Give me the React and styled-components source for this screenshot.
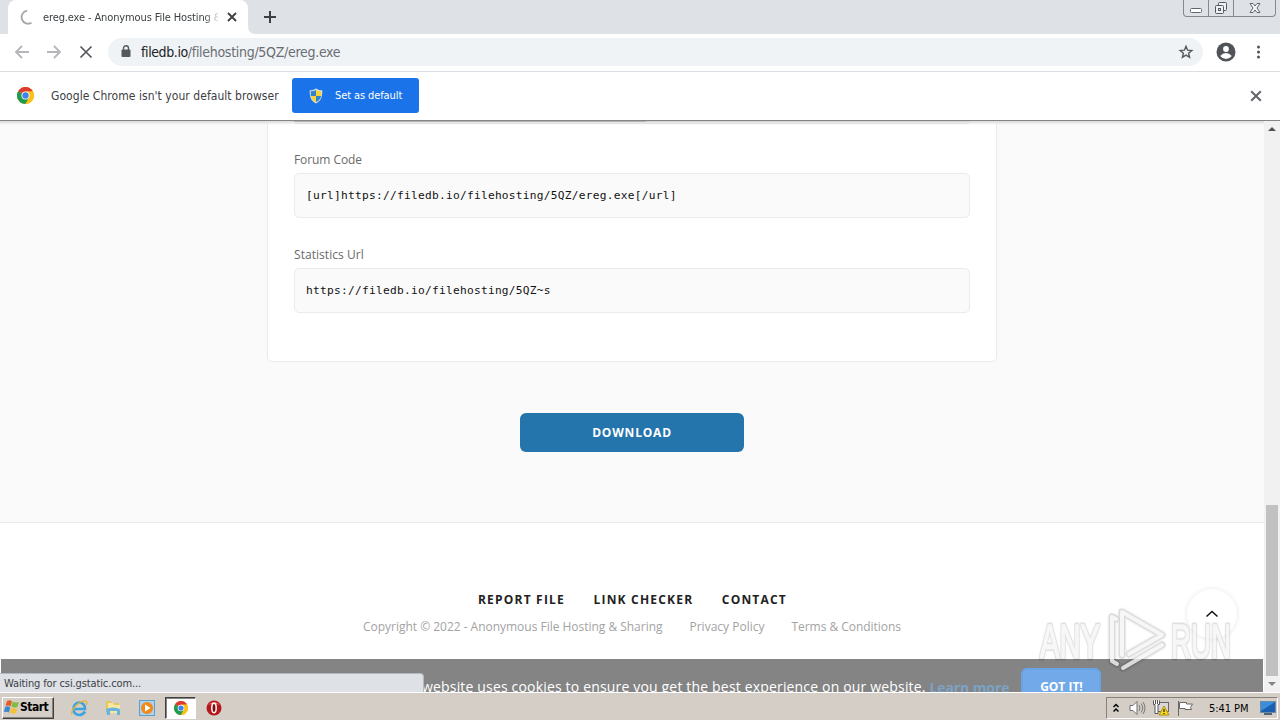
import React from "react";
import styled, { createGlobalStyle } from "styled-components";

const GlobalStyle = createGlobalStyle`
  * {
    box-sizing: border-box;
  }

  body {
    margin: 0;
    overflow: hidden;
    background: #fff;
  }
`;

const uiFont = `"DejaVu Sans Condensed", "DejaVu Sans", sans-serif`;
const pageFont = `"Open Sans", "Noto Sans", sans-serif`;

const Desktop = styled.div`
  display: flex;
  flex-direction: column;
  width: 1280px;
  height: 720px;
  overflow: hidden;
  font-family: ${uiFont};
`;

const Label = styled.span`
  font-size: ${(p) => p.$size || 11}px;
  letter-spacing: ${(p) => p.$spacing || 0}px;
  color: ${(p) => p.$color || "#3c4043"};
  font-weight: ${(p) => p.$weight || 400};
  white-space: pre;
`;

/* Tab strip */

const TabStrip = styled.div`
  display: flex;
  align-items: flex-start;
  height: 34px;
  background: #dee1e6;
`;

const Tab = styled.div`
  display: flex;
  align-items: center;
  width: 240px;
  height: 34px;
  margin-left: 8px;
  padding-left: 11px;
  background: #fff;
  border-radius: 8px 8px 0 0;
`;

const TabTitle = styled.div`
  width: 175px;
  margin: 0 9px 0 8px;
  overflow: hidden;
  line-height: 16px;
  mask-image: linear-gradient(to right, #000 92%, transparent 102%);
`;

const TabFoot = styled.svg`
  align-self: flex-end;
  width: 8px;
  height: 8px;
`;

const NewTab = styled.svg`
  width: 14px;
  height: 14px;
  margin: 10px 0 0 7px;
`;

const Controls = styled.div`
  display: flex;
  height: 17px;
  margin-left: auto;
  margin-right: 4px;
  border: 1px solid #85898f;
  border-top: 0;
  border-radius: 0 0 4px 4px;
`;

const Control = styled.div`
  display: flex;
  align-items: center;
  justify-content: center;
  width: ${(p) => p.$width}px;
  border-left: ${(p) => (p.$divided ? "1px solid #85898f" : "0")};
`;

/* Toolbar */

const Toolbar = styled.div`
  display: flex;
  align-items: center;
  height: 38px;
  padding: 0 13px 2px 14px;
  background: #fff;
  border-bottom: 1px solid #dcdee1;
`;

const NavIcon = styled.svg`
  flex: none;
  width: 16px;
  height: 16px;
  margin-right: 16px;
`;

const AddressBar = styled.div`
  display: flex;
  flex: 1;
  align-items: center;
  height: 28px;
  margin-left: -2px;
  padding: 0 9px 0 13px;
  background: #f0f3f6;
  border-radius: 14px;
`;

const Url = styled.div`
  flex: 1;
  margin-left: 10px;
  white-space: nowrap;
`;

const InfoBar = styled.div`
  display: flex;
  align-items: center;
  height: 49px;
  padding: 0 18px 1px 17px;
  background: #fff;
  border-bottom: 1px solid #848484;
`;

const InfoText = styled.div`
  width: 229px;
  margin: 0 0 2px 17px;
`;

const DefaultButton = styled.div`
  display: flex;
  align-items: center;
  gap: 12px;
  width: 127px;
  height: 35px;
  margin: 0 auto 0 12px;
  padding-left: 17px;
  background: #1a73e8;
  border-radius: 3px;
`;

/* Page */

const Viewport = styled.div`
  position: relative;
  display: flex;
  height: 571px;
  overflow: hidden;
  background: #fff;
`;

const Page = styled.div`
  flex: 1;
  font-family: ${pageFont};
`;

const Main = styled.div`
  display: flex;
  flex-direction: column;
  align-items: center;
  height: 402px;
  background: linear-gradient(#d9d9d9, #fafafa 4px);
  border-bottom: 1px solid #e9e9e9;
`;

const Card = styled.div`
  width: 730px;
  height: 241px;
  padding: 0 26px;
  background: linear-gradient(#d9d9d9, #fff 4px);
  border: 1px solid #e9e9e9;
  border-top: 0;
  border-radius: 0 0 5px 5px;
`;

const FieldEnd = styled.div`
  height: 3px;
  margin-bottom: 24px;
  background: linear-gradient(to right, #b4b4b4 52%, #d3d5d7 52%);
  background-size: 100% 1px;
  background-repeat: no-repeat;
  border-bottom: 1px solid #e2e3e4;
  border-radius: 0 0 5px 5px;
`;

const Field = styled.div`
  margin-bottom: 25px;
`;

const FieldLabel = styled.div`
  height: 20px;
  margin-bottom: 5px;
  line-height: 20px;
`;

const CodeBox = styled.div`
  height: 45px;
  padding-left: 11px;
  background: #fafafa;
  border: 1px solid #ebebeb;
  border-radius: 5px;
  color: #111;
  font: 11.2px/43px "DejaVu Sans Mono", monospace;
  letter-spacing: 0.26px;
`;

const DownloadButton = styled.div`
  width: 224px;
  height: 39px;
  margin-top: 51px;
  background: #2475ab;
  border-radius: 6px;
  line-height: 37px;
  text-align: center;
`;

const Footer = styled.div`
  padding-top: 66px;
`;

const FooterRow = styled.div`
  display: flex;
  gap: ${(p) => p.$gap}px;
  height: ${(p) => p.$height}px;
  padding-left: ${(p) => p.$left}px;
  line-height: 22px;
`;

const CookieBar = styled.div`
  position: absolute;
  left: 1px;
  bottom: 0;
  display: flex;
  width: 1262px;
  height: 33px;
  padding-left: 421px;
  background: #848484;
  overflow: hidden;
  font-family: ${pageFont};
  line-height: 56px;
`;

const LearnMore = styled.div`
  width: 81px;
  white-space: nowrap;
`;

const GotIt = styled.div`
  width: 80px;
  height: 36px;
  margin: 9px 0 0 11px;
  background: #72a9e8;
  border: 2px solid #69a4e7;
  border-radius: 6px;
  line-height: 31px;
  text-align: center;
`;

const TopButton = styled.div`
  position: absolute;
  left: 1187px;
  top: 468px;
  display: flex;
  align-items: center;
  justify-content: center;
  width: 50px;
  height: 50px;
  background: #fff;
  border-radius: 50%;
  box-shadow: 0 0 5px rgba(0, 0, 0, 0.1);
`;

const StatusBubble = styled.div`
  position: absolute;
  left: 0;
  bottom: 0;
  width: 424px;
  height: 19px;
  padding-left: 4px;
  background: #dee1e6;
  border-top: 1px solid #b5b8bc;
  border-right: 1px solid #b5b8bc;
  border-radius: 0 4px 0 0;
  line-height: 16px;
`;

const Watermark = styled.svg`
  position: absolute;
  left: 1030px;
  top: 479px;
`;

const Scrollbar = styled.div`
  display: flex;
  flex-direction: column;
  align-items: center;
  justify-content: space-between;
  width: 16px;
  padding: 5px 0 5px;
  background: #f1f1f1;
`;

const Thumb = styled.div`
  width: 12px;
  height: 171px;
  margin: auto 0 6px;
  background: #c1c1c1;
`;

/* Taskbar */

const Taskbar = styled.div`
  display: flex;
  align-items: center;
  height: 28px;
  padding: 2px 2px 0 2px;
  background: #d5cec7;
  border-top: 1px solid #fff;
`;

const StartButton = styled.div`
  display: flex;
  align-items: center;
  width: 52px;
  height: 22px;
  padding: 0 0 2px 1px;
  border: 1px solid;
  border-color: #fff #404040 #404040 #fff;
  box-shadow: inset -1px -1px #87817c;
`;

const QuickLaunch = styled.div`
  display: flex;
  align-items: center;
  margin-left: 8px;
`;

const LaunchItem = styled.div`
  display: flex;
  align-items: center;
  justify-content: center;
  width: ${(p) => (p.$active ? 31 : 34)}px;
  height: 22px;
  margin: ${(p) => (p.$active ? "0 1px 0 1px" : "0")};
  background: ${(p) => (p.$active ? "#fff" : "transparent")};
  border: ${(p) => (p.$active ? "1px solid" : "0")};
  border-color: #404040 #fff #fff #404040;
  box-shadow: ${(p) => (p.$active ? "inset 1px 1px #87817c" : "none")};
`;

const Tray = styled.div`
  display: flex;
  align-items: center;
  width: 172px;
  height: 22px;
  margin-left: auto;
  padding-left: 6px;
  border: 1px solid;
  border-color: #87817c #fff #fff #87817c;
`;

const TrayIcon = styled.svg`
  flex: none;
  margin-right: ${(p) => p.$gap || 0}px;
`;

const Clock = styled.div`
  flex: 1;
  padding-bottom: 3px;
`;

const ChromeLogo = ({ size }) => (
  <svg width={size} height={size} viewBox="0 0 24 24">
    <circle cx="12" cy="12" r="12" fill="#fbc116" />
    <path d="M12 12 1.6 6A12 12 0 0 1 22.4 6z" fill="#dd3b2f" />
    <path d="M1.6 6 12 12l5 3-5 9A12 12 0 0 1 1.6 6z" fill="#249a50" />
    <path d="M12 6h10.4A12 12 0 0 1 12 24l5.2-9z" fill="#fbc116" />
    <circle cx="12" cy="12" r="5.7" fill="#fff" />
    <circle cx="12" cy="12" r="4.5" fill="#3f83e8" />
  </svg>
);

const Cross = ({ size, color, width = 2 }) => (
  <svg width={size} height={size} viewBox="0 0 10 10">
    <path d="M1 1 9 9M9 1 1 9" stroke={color} strokeWidth={width} />
  </svg>
);

const Shield = () => (
  <svg width="14" height="16" viewBox="0 0 14 16">
    <path d="M7 .5c2 1.4 4 1.8 6.3 1.8C13.5 9 12 13 7 15.5 2 13 .5 9 .7 2.3 3 2.3 5 1.9 7 .5z" fill="#d9dde0" />
    <path d="M7 2v6H1.8V3.3Q5 3.2 7 2z" fill="#3184cb" />
    <path d="M7 2v6h5.2V3.3Q9 3.2 7 2z" fill="#f8d336" />
    <path d="M7 8v6.2Q2.5 12 1.9 8z" fill="#f8d336" />
    <path d="M7 8v6.2Q11.5 12 12.1 8z" fill="#3184cb" />
  </svg>
);

const BrowserTabs = () => (
  <TabStrip>
    <Tab>
      <svg width="16" height="16" viewBox="0 0 16 16">
        <path d="M8 1.6A6.6 6.6 0 1 0 12.5 13.8" fill="none" stroke="#a4a7aa" strokeWidth="1.8" />
      </svg>
      <TabTitle>
        <Label $size={11} $spacing={-0.12}>ereg.exe - Anonymous File Hosting &amp; Sharing</Label>
      </TabTitle>
      <Cross size={10} color="#3c4043" width={1.8} />
    </Tab>
    <TabFoot viewBox="0 0 8 8">
      <path d="M0 0Q0 8 8 8H0z" fill="#fff" />
    </TabFoot>
    <NewTab viewBox="0 0 14 14">
      <path d="M7 1v12M1 7h12" stroke="#3c4043" strokeWidth="2" />
    </NewTab>
    <Controls>
      <Control $width={24}>
        <svg width="12" height="16" viewBox="0 0 12 16">
          <rect x=".5" y="8.5" width="11" height="4" rx="1" fill="#fff" stroke="#62676e" />
        </svg>
      </Control>
      <Control $width={25} $divided>
        <svg width="14" height="16" viewBox="0 0 14 16" fill="#eef0f3" stroke="#555a61">
          <rect x="4.5" y="2.5" width="8" height="8" rx="1" />
          <rect x="1.5" y="5.5" width="8" height="8" rx="1" />
          <rect x="4.5" y="8.5" width="2" height="2" />
        </svg>
      </Control>
      <Control $width={42} $divided>
        <svg width="12" height="16" viewBox="0 0 12 16">
          <path d="M1 3.500h3L6 6l2-2.500h3L8 8l3 4.500H8L6 10l-2 2.500H1L4 8z" fill="#f5f6f8" stroke="#62676e" />
        </svg>
      </Control>
    </Controls>
  </TabStrip>
);

const BrowserToolbar = () => (
  <Toolbar>
    <NavIcon viewBox="0 0 16 16" fill="none" stroke="#b4b6b9" strokeWidth="1.8">
      <path d="M15 8H2M8 2 2 8l6 6" />
    </NavIcon>
    <NavIcon viewBox="0 0 16 16" fill="none" stroke="#b4b6b9" strokeWidth="1.8">
      <path d="M1 8h13M8 2l6 6-6 6" />
    </NavIcon>
    <NavIcon viewBox="0 0 16 16" fill="none" stroke="#55585c" strokeWidth="1.7">
      <path d="M2.500 2.500 13.500 13.500M13.500 2.500 2.500 13.500" />
    </NavIcon>
    <AddressBar>
      <svg width="10" height="13" viewBox="0 0 10 13">
        <path d="M2.500 5V3.300a2.500 2.500 0 0 1 5 0V5" fill="none" stroke="#55595e" strokeWidth="1.4" />
        <rect x=".5" y="4.5" width="9" height="7.5" rx="1" fill="#55595e" />
      </svg>
      <Url>
        <Label $size={14} $spacing={-0.4} $color="#202124">filedb.io</Label>
        <Label $size={14} $spacing={-0.29} $color="#6a6e73">/filehosting/5QZ/ereg.exe</Label>
      </Url>
      <svg width="16" height="16" viewBox="0 0 16 16">
        <path d="m8 2.300 1.600 3.900 4.200.300-3.200 2.700 1 4.100L8 11.100l-3.600 2.200 1-4.100-3.200-2.700 4.200-.300z" fill="none" stroke="#55595e" strokeWidth="1.4" />
      </svg>
    </AddressBar>
    <svg width="46" height="20" viewBox="0 0 46 20">
      <circle cx="23" cy="10" r="9.5" fill="#505458" />
      <circle cx="23" cy="7" r="2.9" fill="#fff" />
      <path d="M17.200 14q2.500-3 5.800-3t5.800 3q-2.500 3-5.800 3t-5.800-3z" fill="#fff" />
    </svg>
    <svg width="18" height="16" viewBox="0 0 18 16" fill="#505458">
      <circle cx="9.5" cy="3" r="1.5" />
      <circle cx="9.5" cy="8" r="1.5" />
      <circle cx="9.5" cy="13" r="1.5" />
    </svg>
  </Toolbar>
);

const DefaultBrowserBar = () => (
  <InfoBar>
    <ChromeLogo size={17} />
    <InfoText>
      <Label $size={12} $spacing={0.05}>Google Chrome isn't your default browser</Label>
    </InfoText>
    <DefaultButton>
      <Shield />
      <Label $size={11} $color="#fff" $spacing={-0.1}>Set as default</Label>
    </DefaultButton>
    <Cross size={12} color="#62666a" width={1.7} />
  </InfoBar>
);

const WebPage = () => (
  <Page>
    <Main>
      <Card>
        <FieldEnd />
        <Field>
          <FieldLabel>
            <Label $size={12} $color="#6a6a6a" $spacing={-0.08}>Forum Code</Label>
          </FieldLabel>
          <CodeBox>[url]https://filedb.io/filehosting/5QZ/ereg.exe[/url]</CodeBox>
        </Field>
        <Field>
          <FieldLabel>
            <Label $size={12} $color="#6a6a6a" $spacing={0.05}>Statistics Url</Label>
          </FieldLabel>
          <CodeBox>https://filedb.io/filehosting/5QZ~s</CodeBox>
        </Field>
      </Card>
      <DownloadButton>
        <Label $size={12} $weight={700} $color="#fff" $spacing={0.8}>DOWNLOAD</Label>
      </DownloadButton>
    </Main>
    <Footer>
      <FooterRow $left={478} $gap={28.5} $height={27}>
        <Label $size={12} $weight={700} $color="#222" $spacing={1.2}>REPORT FILE</Label>
        <Label $size={12} $weight={700} $color="#222" $spacing={1.2}>LINK CHECKER</Label>
        <Label $size={12} $weight={700} $color="#222" $spacing={1.2}>CONTACT</Label>
      </FooterRow>
      <FooterRow $left={363} $gap={27} $height={22}>
        <Label $size={12} $color="#a3a3a3" $spacing={-0.02}>Copyright © 2022 - Anonymous File Hosting &amp; Sharing</Label>
        <Label $size={12} $color="#a3a3a3">Privacy Policy</Label>
        <Label $size={12} $color="#a3a3a3" $spacing={-0.04}>Terms &amp; Conditions</Label>
      </FooterRow>
    </Footer>
  </Page>
);

const AnyRunText = (props) => (
  <g fontFamily="Liberation Sans, sans-serif" fontSize="48" strokeLinejoin="round" {...props}>
    <text x="1040" y="658" textLength="60" lengthAdjust="spacingAndGlyphs">ANY</text>
    <text x="1171" y="658" textLength="60" lengthAdjust="spacingAndGlyphs">RUN</text>
  </g>
);

const markPath = "M1116 619l-4-2v44l5 3M1122 655v-43l40 23-33 19M1123 668l39-23";

const AnyRun = () => (
  <Watermark width="215" height="80" viewBox="1030 600 215 80">
    <AnyRunText fill="#000" stroke="#000" strokeWidth="6" opacity="0.06" />
    <AnyRunText fill="#000" stroke="#000" strokeWidth="4" opacity="0.06" />
    <AnyRunText fill="#fff" stroke="#fff" strokeWidth="1.5" opacity="0.75" />
    <g fill="none" strokeLinejoin="round" strokeLinecap="round">
      <path d={markPath} stroke="#000" opacity="0.06" strokeWidth="9" />
      <path d={markPath} stroke="#000" opacity="0.09" strokeWidth="6.5" />
      <path d={markPath} stroke="#fff" opacity="0.75" strokeWidth="4" />
    </g>
  </Watermark>
);

const WindowsTaskbar = () => (
  <Taskbar>
    <StartButton>
      <svg width="16" height="16" viewBox="0 0 16 16">
        <path d="M3 2q3-1.500 5 .3L6.700 7.500Q4.500 6 1.500 7z" fill="#e45d28" />
        <path d="M8.700 2.800q3 1.500 6 .2L13.500 8Q10.500 9 7.500 7.700z" fill="#7fbb3e" />
        <path d="M1.200 8q3-1.500 5 .5L5 13.500Q2.500 12-.2 13.200z" fill="#3d87cd" />
        <path d="M7.200 8.800q3 1.500 6 .2L12 14q-3 1.300-6-.2z" fill="#f4c134" />
      </svg>
      <Label $size={12} $weight={700} $color="#000" $spacing={-0.5}>Start</Label>
    </StartButton>
    <QuickLaunch>
      <LaunchItem>
        <svg width="18" height="18" viewBox="0 0 18 18">
          <path d="M15 12.500Q13 16 9 16q-5.500-.5-5.500-6Q4 3.500 9.500 3.500q5.500.5 5.500 6.500H5" fill="none" stroke="#3ba4df" strokeWidth="2.6" />
          <path d="M2 15.500C0 11 10 1 16 2q2 1 0 4" fill="none" stroke="#e7b53b" strokeWidth="1.3" />
        </svg>
      </LaunchItem>
      <LaunchItem>
        <svg width="18" height="18" viewBox="0 0 18 18">
          <path d="M2 2h5l1 2h7v9H2z" fill="#e8c659" />
          <path d="M4 4h5l1 2h6v8H4z" fill="#f9e8a1" />
          <path d="M2 10q7-3 14 0v6h-3v-4H6v4H3z" fill="#69b4df" />
        </svg>
      </LaunchItem>
      <LaunchItem>
        <svg width="16" height="16" viewBox="0 0 16 16">
          <rect x=".5" y=".5" width="15" height="15" fill="#a9d3ee" stroke="#5f9fc9" />
          <circle cx="8" cy="8" r="6" fill="#f28a19" />
          <path d="M6 4.500v7L11.500 8z" fill="#fff" />
        </svg>
      </LaunchItem>
      <LaunchItem $active>
        <ChromeLogo size={14} />
      </LaunchItem>
      <LaunchItem>
        <svg width="16" height="16" viewBox="0 0 16 16">
          <circle cx="8" cy="8" r="7.5" fill="#b6171c" />
          <path d="M2 5Q8-1 14 5 8 2 2 5" fill="#e8736c" />
          <ellipse cx="8" cy="8" rx="2.2" ry="4.7" fill="#7d1013" stroke="#fff" strokeWidth="1.5" />
        </svg>
      </LaunchItem>
    </QuickLaunch>
    <Tray>
      <TrayIcon $gap={10} width="6" height="10" viewBox="0 0 6 10">
        <path d="M.5 4 3 1.500 5.500 4M.5 8.500 3 6l2.500 2.500" fill="none" stroke="#000" strokeWidth="1.5" />
      </TrayIcon>
      <TrayIcon $gap={7} width="17" height="16" viewBox="0 0 17 16">
        <path d="M1 5.500h3l4-4v13l-4-4H1z" fill="#fff" stroke="#6c6c6c" />
        <path d="M10 5q2 3 0 6M12 3.500q3.500 4.500 0 9M14 2q4 6 0 12" fill="none" stroke="#777" />
      </TrayIcon>
      <TrayIcon $gap={7} width="17" height="16" viewBox="0 0 17 16">
        <rect x="4.5" y="2.5" width="11" height="9" fill="#d8d8d8" stroke="#666" />
        <path d="M.5.500v4h1.500v9h3v-9h1.500v-4M2.500 0v4M4.500 0v4" fill="#fff" stroke="#555" />
        <path d="M11 6 16 15H6z" fill="#f6d721" stroke="#b69400" />
        <path d="M11 9v3M11 13v1" stroke="#222" strokeWidth="1.2" />
      </TrayIcon>
      <TrayIcon $gap={15} width="17" height="16" viewBox="0 0 17 16">
        <path d="M1.500 1v15M2.500 2.500h7v1.500h6l-2 3.500 1 2H8v-1H2.500z" fill="#fff" stroke="#686868" />
      </TrayIcon>
      <Clock>
        <Label $size={11} $color="#000" $spacing={-0.05}>5:41 PM</Label>
      </Clock>
      <TrayIcon width="17" height="14" viewBox="0 0 17 14">
        <rect x=".5" y=".5" width="15" height="11" fill="#1b5fae" stroke="#6b8ba9" />
        <path d="M1 1h14L1 10z" fill="#3a8edb" />
        <path d="M4 13h8" stroke="#536575" strokeWidth="2" />
      </TrayIcon>
    </Tray>
  </Taskbar>
);

const App = () => {
  return (
    <Desktop>
      <GlobalStyle />
      <BrowserTabs />
      <BrowserToolbar />
      <DefaultBrowserBar />
      <Viewport>
        <WebPage />
        <Scrollbar>
          <svg width="8" height="5" viewBox="0 0 8 5">
            <path d="M0 5 4 1l4 4z" fill="#505050" />
          </svg>
          <Thumb />
          <svg width="8" height="5" viewBox="0 0 8 5">
            <path d="M0 0 4 4l4-4z" fill="#858585" />
          </svg>
        </Scrollbar>
        <TopButton>
          <svg width="14" height="8" viewBox="0 0 14 8">
            <path d="M1.500 6.500 7 1.500l5.500 5" fill="none" stroke="#111" strokeWidth="1.5" />
          </svg>
        </TopButton>
        <CookieBar>
          <Label $size={14} $color="#fff" $spacing={0.17}>website uses cookies to ensure you get the best experience on our website. </Label>
          <LearnMore>
            <Label $size={14} $color="#7ba3c6" $spacing={-0.1} $weight={700}>Learn more</Label>
          </LearnMore>
          <GotIt>
            <Label $size={12} $weight={700} $color="#fff">GOT IT!</Label>
          </GotIt>
        </CookieBar>
        <StatusBubble>
          <Label $size={11} $spacing={-0.12}>Waiting for csi.gstatic.com...</Label>
        </StatusBubble>
        <AnyRun />
      </Viewport>
      <WindowsTaskbar />
    </Desktop>
  );
};

export default App;
